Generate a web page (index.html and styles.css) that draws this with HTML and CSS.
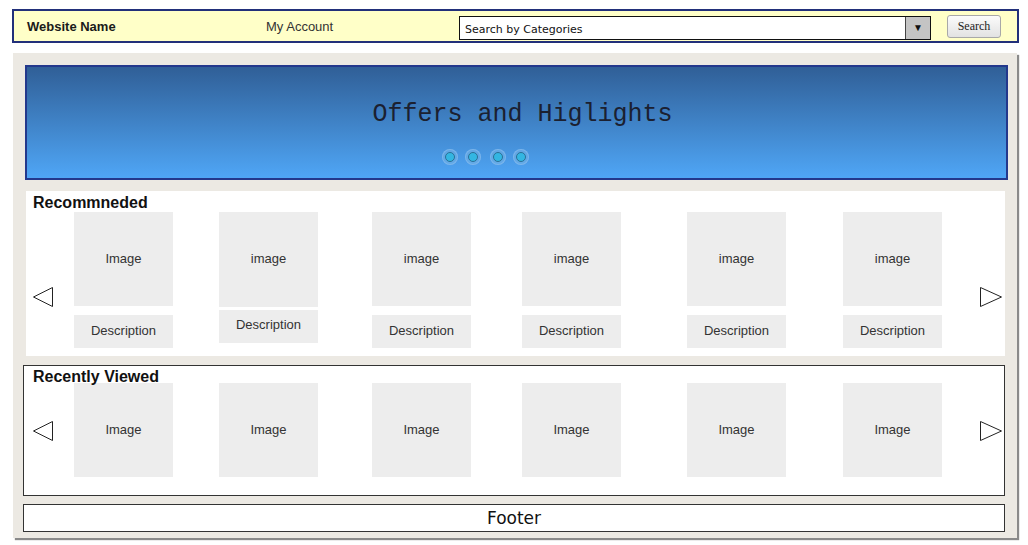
FILE: index.html
```html
<!DOCTYPE html>
<html>
<head>
<meta charset="utf-8">
<link rel="stylesheet" href="styles.css">
</head>
<body>
<header class="topbar">
  <div class="brand">Website Name</div>
  <div class="account">My Account</div>
  <div class="select">
    <span class="select-text">Search by Categories</span>
    <span class="select-btn">▼</span>
  </div>
  <button class="search-btn">Search</button>
</header>

<main class="panel">
  <section class="banner">
    <div class="banner-title">Offers and Higlights</div>
    <div class="dots">
      <span class="dot"></span><span class="dot"></span><span class="dot d3"></span><span class="dot"></span>
    </div>
  </section>

  <section class="rec">
    <h2 class="sec-title">Recommneded</h2>
    <div class="row">
      <svg class="arrow arrow-rec" width="20" height="20" viewBox="0 0 20 20"><polygon points="19.5,0.5 0.5,10 19.5,19.5" fill="#fff" stroke="#222" stroke-width="1"/></svg>
      <div class="card"><div class="img">Image</div><div class="desc">Description</div></div>
      <div class="card card-alt"><div class="img">image</div><div class="desc">Description</div></div>
      <div class="card"><div class="img">image</div><div class="desc">Description</div></div>
      <div class="card"><div class="img">image</div><div class="desc">Description</div></div>
      <div class="card"><div class="img">image</div><div class="desc">Description</div></div>
      <div class="card"><div class="img">image</div><div class="desc">Description</div></div>
      <svg class="arrow arrow-rec" width="22" height="20" viewBox="0 0 22 20"><polygon points="0.5,0.5 21.5,10 0.5,19.5" fill="#fff" stroke="#222" stroke-width="1"/></svg>
    </div>
  </section>

  <section class="recent">
    <h2 class="sec-title recent-title">Recently Viewed</h2>
    <div class="row">
      <svg class="arrow" width="20" height="20" viewBox="0 0 20 20"><polygon points="19.5,0.5 0.5,10 19.5,19.5" fill="#fff" stroke="#222" stroke-width="1"/></svg>
      <div class="card"><div class="img">Image</div></div>
      <div class="card"><div class="img">Image</div></div>
      <div class="card"><div class="img">Image</div></div>
      <div class="card"><div class="img">Image</div></div>
      <div class="card"><div class="img">Image</div></div>
      <div class="card"><div class="img">Image</div></div>
      <svg class="arrow" width="22" height="20" viewBox="0 0 22 20"><polygon points="0.5,0.5 21.5,10 0.5,19.5" fill="#fff" stroke="#222" stroke-width="1"/></svg>
    </div>
  </section>

  <footer class="footer">Footer</footer>
</main>
</body>
</html>
```

FILE: styles.css
```css
* { box-sizing: border-box; }
html, body { margin: 0; padding: 0; background: #fff; }
body {
  font-family: "Liberation Sans", Arial, sans-serif;
  color: #222;
  width: 1028px;
  height: 545px;
  overflow: hidden;
}

.topbar {
  margin: 9px 9px 0 12px;
  height: 34px;
  border: 2px solid #22307a;
  background: #ffffc8;
  display: flex;
  align-items: center;
  font-size: 13px;
}
.brand {
  font-weight: bold;
  margin-left: 13px;
  width: 239px;
  color: #1a1a1a;
}
.account {
  color: #333;
  width: 193px;
}
.select {
  width: 472px;
  height: 24px;
  margin-top: 3px;
  border: 1px solid #111;
  background: #fff;
  display: flex;
  align-items: stretch;
}
.select-text {
  flex: 1;
  font-family: "DejaVu Sans", sans-serif;
  font-size: 11px;
  padding-left: 5px;
  padding-top: 6px;
  color: #111;
}
.select-btn {
  width: 25px;
  background: #c4c4c4;
  border-left: 1px solid #444;
  font-size: 10px;
  display: flex;
  align-items: center;
  justify-content: center;
  color: #111;
}
.search-btn {
  margin-left: 16px;
  width: 54px;
  height: 23px;
  margin-top: 1px;
  border: 1px solid #a8a8a8;
  border-radius: 3px;
  background: linear-gradient(#fbfbfb, #e2e2e2);
  font-family: "Liberation Serif", "Times New Roman", serif;
  font-size: 12px;
  color: #222;
  padding: 0;
}

.panel {
  margin: 10px 0 0 13px;
  width: 1004px;
  height: 485px;
  background: #ece9e3;
  box-shadow: 2px 2px 1px #8a8a8a;
  padding: 12px 12px 0 10px;
  display: flex;
  flex-direction: column;
}

.banner {
  margin: 0 -3px 0 2px;
  height: 115px;
  border: 2px solid #23388c;
  background: linear-gradient(#305f97, #4fa6f6);
  display: flex;
  flex-direction: column;
  align-items: center;
}
.banner-title {
  font-family: "Liberation Mono", "Courier New", monospace;
  font-size: 25px;
  color: #1b2030;
  margin-top: 34px;
  line-height: 28px;
  margin-left: 12px;
}
.dots {
  display: flex;
  gap: 7px;
  margin-top: 20px;
  margin-left: -63px;
}
.dot {
  width: 16px;
  height: 16px;
  border-radius: 50%;
  background: rgba(120, 180, 230, 0.55);
  box-shadow: inset 0 0 0 1px rgba(140, 190, 240, 0.6);
  display: flex;
  align-items: center;
  justify-content: center;
}
.dot.d3 { margin-left: 2px; }
.dot::after {
  content: "";
  width: 10px;
  height: 10px;
  border-radius: 50%;
  background: #33b6e2;
  border: 1px solid #2a6f96;
  box-sizing: border-box;
}

.sec-title {
  margin: 0;
  font-size: 16px;
  font-weight: bold;
  line-height: 18px;
  color: #111;
}

.rec {
  margin: 11px 0 0 3px;
  height: 165px;
  background: #fff;
  padding: 3px 3px 0 7px;
}
.rec .sec-title { height: 18px; }

.row {
  display: flex;
  align-items: flex-start;
}
.row > :nth-child(2) { margin-left: 21px; }
.row > :nth-child(3) { margin-left: 46px; }
.row > :nth-child(4) { margin-left: 54px; }
.row > :nth-child(5) { margin-left: 51px; }
.row > :nth-child(6) { margin-left: 66px; }
.row > :nth-child(7) { margin-left: 57px; }
.row > :nth-child(8) { margin-left: 38px; }

.arrow { display: block; flex: none; }
.arrow-rec { margin-top: 75px; }
.recent .arrow { margin-top: 38px; }

.card {
  width: 99px;
  flex: none;
  display: flex;
  flex-direction: column;
}
.img {
  height: 94px;
  background: #ededed;
  display: flex;
  align-items: center;
  justify-content: center;
  font-size: 13px;
  color: #333;
  padding-bottom: 1px;
}
.desc {
  margin-top: 9px;
  height: 33px;
  background: #ededed;
  display: flex;
  align-items: center;
  justify-content: center;
  font-size: 13px;
  color: #333;
  padding-bottom: 2px;
}
.card-alt .img { height: 95px; padding-bottom: 3px; }
.card-alt .desc { margin-top: 3px; padding-bottom: 4px; }

.recent {
  margin-top: 9px;
  height: 131px;
  background: #fff;
  border: 1px solid #333;
  padding: 1px 3px 0 9px;
}
.recent-title {
  height: 16px;
  line-height: 20px;
  position: relative;
  z-index: 1;
}

.footer {
  margin-top: 8px;
  height: 28px;
  background: #fff;
  border: 1px solid #333;
  font-family: "DejaVu Sans", sans-serif;
  font-size: 17px;
  display: flex;
  align-items: center;
  justify-content: center;
  color: #111;
}
```
